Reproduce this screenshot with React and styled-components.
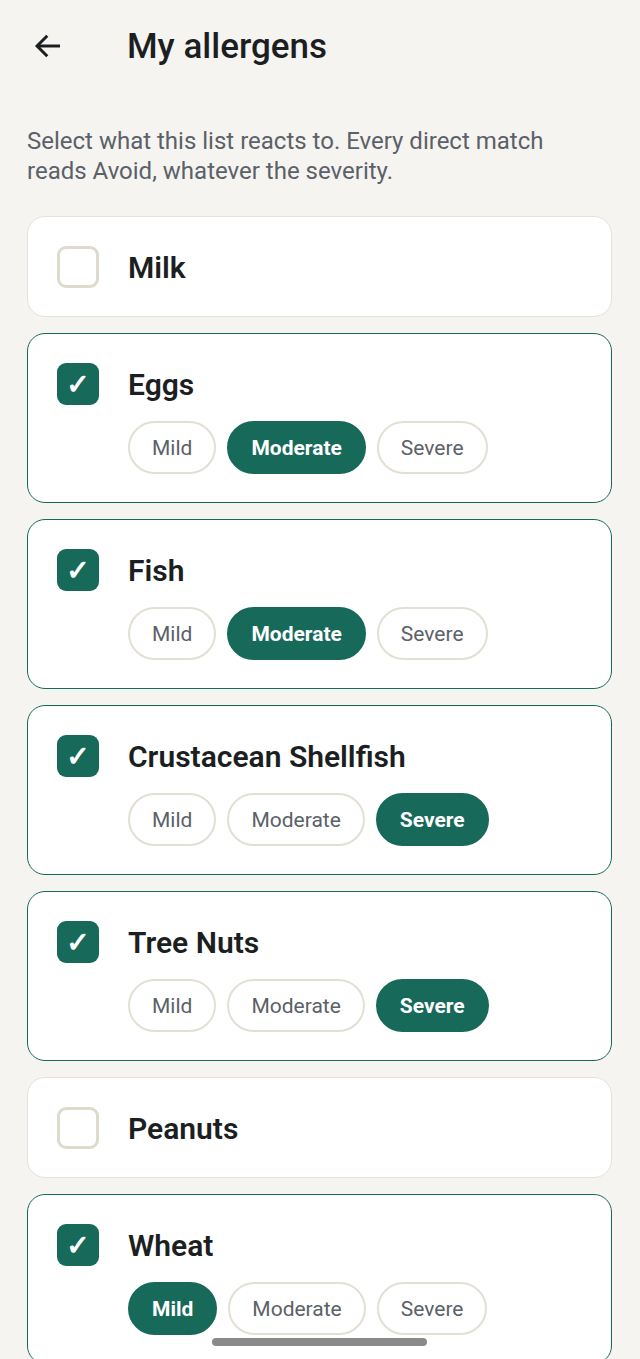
import styled, { createGlobalStyle } from 'styled-components';

const GlobalStyle = createGlobalStyle`
  html, body {
    margin: 0;
    background: #f6f4f0;
  }
  body {
    font-family: Roboto, 'Liberation Sans', sans-serif;
    color: #1c1f22;
  }
`;

const allergens = [
  { name: 'Milk', checked: false },
  { name: 'Eggs', checked: true, severity: 'Moderate' },
  { name: 'Fish', checked: true, severity: 'Moderate' },
  { name: 'Crustacean Shellfish', checked: true, severity: 'Severe' },
  { name: 'Tree Nuts', checked: true, severity: 'Severe' },
  { name: 'Peanuts', checked: false },
  { name: 'Wheat', checked: true, severity: 'Mild' },
];

const levels = ['Mild', 'Moderate', 'Severe'];

const Page = styled.div`
  min-height: 1359px;
  padding: 0 28px 0 27px;
`;

// Top bar with back arrow and screen title
const TopBar = styled.header`
  display: flex;
  align-items: center;
  height: 92px;
`;

const BackButton = styled.button`
  display: flex;
  align-items: center;
  justify-content: center;
  width: 42px;
  height: 42px;
  padding: 0;
  border: none;
  background: none;
  color: #1c1f22;
`;

const Title = styled.h1`
  margin: 0 0 0 58px;
  font-size: 35px;
  font-weight: 500;
  letter-spacing: 0;
`;

const Intro = styled.p`
  max-width: 560px;
  margin: 34px 0 30px;
  font-size: 24px;
  line-height: 30px;
  color: #5b6168;
`;

const List = styled.div`
  display: flex;
  flex-direction: column;
  gap: 16px;
`;

const Card = styled.div`
  background: #ffffff;
  border: ${(p) => (p.$active ? '1.5px solid #17695a' : '1.5px solid #e6e2d9')};
  border-radius: 18px;
  padding: 29px 28px 28px 29px;
  display: flex;
  gap: 29px;
`;

const Box = styled.div`
  flex: none;
  width: 42px;
  height: 42px;
  box-sizing: border-box;
  border-radius: 9px;
  display: flex;
  align-items: center;
  justify-content: center;
  background: ${(p) => (p.$checked ? '#17695a' : '#ffffff')};
  border: ${(p) => (p.$checked ? 'none' : '3px solid #dedace')};
  color: #ffffff;
  font-family: 'DejaVu Sans', sans-serif;
  font-size: 28px;
  font-weight: 700;
  -webkit-text-stroke: 1px #ffffff;
`;

const Body = styled.div`
  display: flex;
  flex-direction: column;
  gap: 16px;
`;

const Name = styled.div`
  height: 42px;
  display: flex;
  align-items: center;
  font-size: 30px;
  font-weight: 600;
`;

const Chips = styled.div`
  display: flex;
  gap: 11px;
`;

const Chip = styled.button`
  height: 53px;
  padding: 0 22px;
  border-radius: 27px;
  box-sizing: border-box;
  font-family: Roboto, 'Liberation Sans', sans-serif;
  font-size: 21px;
  font-weight: ${(p) => (p.$selected ? 700 : 400)};
  color: ${(p) => (p.$selected ? '#ffffff' : '#5b6168')};
  background: ${(p) => (p.$selected ? '#17695a' : '#ffffff')};
  border: ${(p) => (p.$selected ? '2px solid #17695a' : '2px solid #e3dfd4')};
`;

const HomeIndicator = styled.div`
  position: fixed;
  left: 212px;
  bottom: 13px;
  width: 215px;
  height: 8px;
  border-radius: 4px;
  background: #8a8a8a;
`;

function BackArrow() {
  return (
    <svg width="34" height="34" viewBox="0 0 24 24" fill="none" stroke="currentColor" strokeWidth="2.1">
      <path d="M20.5 12H4.5" />
      <path d="M11.5 4.8L4.3 12l7.2 7.2" />
    </svg>
  );
}

function AllergenCard({ name, checked, severity }) {
  return (
    <Card $active={checked}>
      <Box $checked={checked}>{checked ? '✓' : null}</Box>
      <Body>
        <Name>{name}</Name>
        {checked && (
          <Chips>
            {levels.map((l) => (
              <Chip key={l} $selected={l === severity}>
                {l}
              </Chip>
            ))}
          </Chips>
        )}
      </Body>
    </Card>
  );
}

export default function App() {
  return (
    <>
      <GlobalStyle />
      <Page>
        <TopBar>
          <BackButton aria-label="Back">
            <BackArrow />
          </BackButton>
          <Title>My allergens</Title>
        </TopBar>
        <Intro>
          Select what this list reacts to. Every direct match reads Avoid, whatever the severity.
        </Intro>
        <List>
          {allergens.map((a) => (
            <AllergenCard key={a.name} {...a} />
          ))}
        </List>
      </Page>
      <HomeIndicator />
    </>
  );
}
